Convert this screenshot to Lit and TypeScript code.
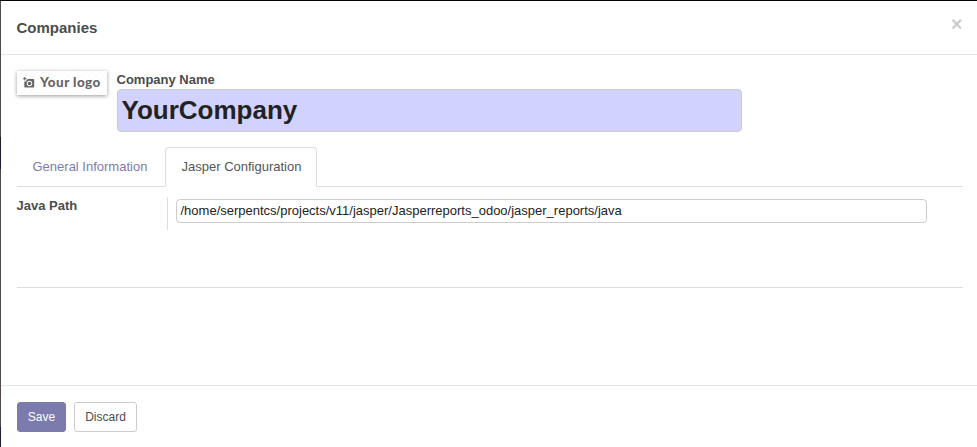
import { LitElement, html, css } from "lit";
import { customElement, property } from "lit/decorators.js";

@customElement("company-logo")
class CompanyLogo extends LitElement {
  static styles = css`
    :host {
      display: flex;
      align-items: center;
      box-sizing: border-box;
      width: 90px;
      height: 24px;
      padding-left: 6px;
      background: repeating-linear-gradient(135deg, #fff 0 4px, #fafafa 4px 5px);
      box-shadow: 0 1px 4px rgba(0, 0, 0, 0.4);
      color: #666;
    }
    svg { display: block; flex: none; margin-right: 5px; }
    .label {
      margin-top: -2px;
      font: 900 13.5px/22px Lato, sans-serif;
      letter-spacing: 0.45px;
      white-space: nowrap;
    }
  `;
  render() {
    return html`
      <svg width="12" height="12" viewBox="0 0 12 12">
        <path fill="currentColor" fill-rule="evenodd"
          d="M1.3 0h1v1.3h1.3v1H2.3v1.3h-1V2.3H0v-1h1.3zM4.3 2h4.2l.8 0h1.2c.4 0 .7.3.7.7v7.1c0 .4-.3.7-.7.7H2c-.4 0-.7-.3-.7-.7V4.5h2V3.1h1zM6.5 3.8a2.7 2.7 0 1 0 0 5.4 2.7 2.7 0 0 0 0-5.4z"/>
        <circle cx="6.5" cy="6.5" r="1.8" fill="currentColor"/>
      </svg>
      <span class="label">Your logo</span>
    `;
  }
}

@customElement("app-root")
class AppRoot extends LitElement {
  @property() company = "YourCompany";
  @property() javaPath = "/home/serpentcs/projects/v11/jasper/Jasperreports_odoo/jasper_reports/java";

  static styles = css`
    :host {
      display: grid;
      grid-template-columns: 1px 1fr;
      grid-template-rows: 1px 446px;
      width: 977px;
      height: 447px;
      overflow: hidden;
      background: #fff;
      color: #4c4c4c;
      font: 13px/20px "Liberation Sans", Arial, sans-serif;
      white-space: nowrap;
    }
    * { box-sizing: border-box; }
    .top { grid-column: 1 / 3; background: #080408; }
    .edge {
      background: linear-gradient(#4c4c4c 0 136px, #1f1a33 136px 168px, #4c4c4c 168px 390px,
        #5b4036 390px 394px, #4c4c4c 394px 426px, #1f1a33 426px);
    }
    .dialog { display: flex; flex-direction: column; min-width: 0; }
    header {
      display: flex;
      justify-content: space-between;
      height: 54px;
      padding: 0 14.5px 0 15.5px;
      border-bottom: 1px solid #e5e5e5;
    }
    h4 { margin: 0; font-size: 15px; line-height: 54px; }
    .close { font-size: 19.5px; font-weight: bold; line-height: 46px; color: #ccc; }
    main { height: 330px; padding: 16px 14px 0 16px; }
    .title { display: flex; }
    .name { display: flex; flex-direction: column; width: 625px; margin-left: 10px; }
    .name label { line-height: 18px; font-weight: bold; margin-left: -0.5px; }
    .name-input {
      height: 43px;
      padding: 0 3.5px;
      border: 1px solid #ccc;
      border-radius: 4px;
      background: #d2d2ff;
      color: #222;
      font-size: 26px;
      font-weight: bold;
      line-height: 41px;
    }
    nav { display: flex; height: 40px; margin-top: 15px; border-bottom: 1px solid #ddd; }
    .tab {
      height: 40px;
      padding: 0 15px;
      border: 1px solid transparent;
      line-height: 38px;
      color: #7c7bad;
    }
    .first { width: 148px; padding-left: 14.5px; }
    .active {
      width: 152px;
      padding-left: 15.5px;
      border-color: #ddd #ddd #fff;
      border-radius: 4px 4px 0 0;
      background: #fff;
      color: #555;
    }
    .panel { display: flex; height: 101px; border-bottom: 1px solid #ddd; }
    .panel label { width: 150px; padding-top: 9px; font-weight: bold; margin-left: -0.5px; }
    .cell { height: 33px; margin: 10px 0 0 0.5px; padding: 2px 0 0 8px; border-left: 1px solid #ddd; }
    .input {
      width: 751px;
      height: 24px;
      padding: 0 3.5px;
      border: 1px solid #ccc;
      border-radius: 4px;
      color: #222;
      line-height: 22px;
    }
    footer { display: flex; gap: 8px; height: 62px; padding: 16px 16px 0; border-top: 1px solid #e5e5e5; }
    button {
      width: 63px;
      height: 30px;
      padding: 0;
      border: 1px solid #ccc;
      border-radius: 3px;
      background: #fff;
      color: #4c4c4c;
      font: 12px/18px "Liberation Sans", Arial, sans-serif;
    }
    .primary { width: 49px; border-color: #7c7bad; background: #7c7bad; color: #fff; }
  `;

  render() {
    return html`
      <div class="top"></div>
      <div class="edge"></div>
      <div class="dialog">
        <header><h4>Companies</h4><span class="close">×</span></header>
        <main>
          <div class="title">
            <company-logo></company-logo>
            <div class="name">
              <label>Company Name</label>
              <div class="name-input">${this.company}</div>
            </div>
          </div>
          <nav>
            <span class="tab first">General Information</span>
            <span class="tab active">Jasper Configuration</span>
          </nav>
          <section class="panel">
            <label>Java Path</label>
            <div class="cell"><div class="input">${this.javaPath}</div></div>
          </section>
        </main>
        <footer><button class="primary">Save</button><button>Discard</button></footer>
      </div>
    `;
  }
}
